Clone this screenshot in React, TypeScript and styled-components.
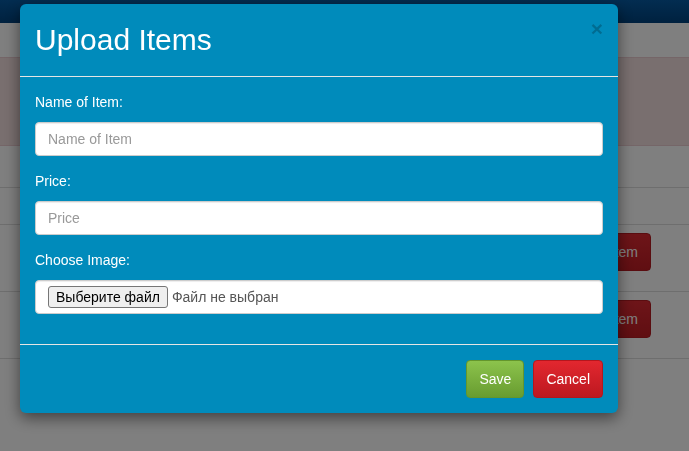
import React from "react";
import styled, { createGlobalStyle, css } from "styled-components";

const GlobalStyle = createGlobalStyle`
  html, body {
    margin: 0;
    padding: 0;
    background: #ffffff;
    font-family: "Liberation Sans", Arial, sans-serif;
  }
  * { box-sizing: border-box; }
`;

const Page = styled.div`
  display: flex;
  flex-direction: column;
  min-height: 451px;
  background: #ffffff;
`;

const Navbar = styled.div`
  height: 23px;
  background: linear-gradient(#065aa2, #00427e);
`;

const TopBand = styled.div`
  height: 34px;
  background: #ffffff;
`;

const Alert = styled.div`
  height: 89px;
  background: #f2dede;
  border-top: 1px solid #ebccd1;
  border-bottom: 1px solid #ebccd1;
`;

const Table = styled.div`
  margin-top: 41px;
  border-top: 1px solid #dddddd;
`;

const HeadRow = styled.div`
  height: 37px;
  border-bottom: 1px solid #dddddd;
`;

const Row = styled.div`
  display: flex;
  justify-content: flex-end;
  padding: 8px 38px 20px 0;
  border-bottom: 1px solid #dddddd;
`;

const DangerButton = styled.button`
  height: 38px;
  padding: 8px 12px;
  font-family: inherit;
  font-size: 14px;
  line-height: 20px;
  color: #ffffff;
  background: linear-gradient(#dc2a32, #c01d24);
  border: 1px solid #b51a21;
  border-radius: 4px;
`;

const Backdrop = styled.div`
  position: fixed;
  inset: 0;
  background: rgba(0, 0, 0, 0.5);
`;

const Modal = styled.div`
  position: fixed;
  top: 4px;
  left: 20px;
  width: 598px;
  display: flex;
  flex-direction: column;
  background: #008bbb;
  color: #ffffff;
  border-radius: 6px;
  box-shadow: 0 5px 15px rgba(0, 0, 0, 0.5);
`;

const Header = styled.div`
  display: flex;
  justify-content: space-between;
  align-items: flex-start;
  padding: 19px 15px 20px 15px;
  border-bottom: 1px solid #e5e5e5;
`;

const Title = styled.h3`
  margin: 0;
  font-size: 30px;
  line-height: 33px;
  font-weight: 400;
  color: #ffffff;
`;

const Close = styled.button`
  margin-top: -5px;
  padding: 0;
  background: none;
  border: 0;
  font-family: inherit;
  font-size: 21px;
  font-weight: 700;
  line-height: 1;
  color: #000000;
  opacity: 0.22;
`;

const Body = styled.div`
  padding: 15px;
`;

const FormGroup = styled.div`
  margin-bottom: 15px;
`;

const Label = styled.label`
  display: block;
  font-size: 14px;
  line-height: 20px;
  font-weight: 400;
  margin-bottom: 10px;
  color: #ffffff;
`;

const fieldBox = css`
  display: block;
  width: 100%;
  height: 34px;
  padding: 6px 12px;
  font-family: inherit;
  font-size: 14px;
  line-height: 20px;
  color: #555555;
  background: #ffffff;
  border: 1px solid #cccccc;
  border-radius: 4px;
  box-shadow: inset 0 1px 1px rgba(0, 0, 0, 0.075);
`;

const Input = styled.input`
  ${fieldBox}
  outline: none;
  &::placeholder {
    color: #999999;
  }
`;

const FileField = styled.div`
  ${fieldBox}
  display: flex;
  align-items: center;
  gap: 4px;
  padding-top: 0;
  padding-bottom: 0;
`;

const FileButton = styled.button`
  height: 22px;
  padding: 0 7px;
  font-family: inherit;
  font-size: 14px;
  line-height: 20px;
  color: #000000;
  background: #efefef;
  border: 1px solid #767676;
  border-radius: 3px;
`;

const FileStatus = styled.span`
  color: #555555;
  font-size: 14px;
`;

const Footer = styled.div`
  display: flex;
  justify-content: flex-end;
  gap: 9px;
  padding: 15px;
  border-top: 1px solid #e5e5e5;
`;

const ActionButton = styled.button<{ $variant: "save" | "cancel" }>`
  height: 38px;
  padding: 8px 12px;
  font-family: inherit;
  font-size: 14px;
  line-height: 20px;
  color: #ffffff;
  border-radius: 4px;
  ${({ $variant }) =>
    $variant === "save"
      ? css`
          background: linear-gradient(#8cc34c, #689c30);
          border: 1px solid #64962c;
        `
      : css`
          background: linear-gradient(#e2272f, #bd1820);
          border: 1px solid #b5161d;
        `}
`;

export default function App() {
  return (
    <>
      <GlobalStyle />
      <Page>
        <Navbar />
        <TopBand />
        <Alert />
        <Table>
          <HeadRow />
          <Row>
            <DangerButton>Delete Item</DangerButton>
          </Row>
          <Row>
            <DangerButton>Delete Item</DangerButton>
          </Row>
        </Table>
      </Page>
      <Backdrop />
      <Modal>
        <Header>
          <Title>Upload Items</Title>
          <Close aria-label="Close">×</Close>
        </Header>
        <Body>
          <FormGroup>
            <Label>Name of Item:</Label>
            <Input placeholder="Name of Item" />
          </FormGroup>
          <FormGroup>
            <Label>Price:</Label>
            <Input placeholder="Price" />
          </FormGroup>
          <FormGroup>
            <Label>Choose Image:</Label>
            <FileField>
              <FileButton>Выберите файл</FileButton>
              <FileStatus>Файл не выбран</FileStatus>
            </FileField>
          </FormGroup>
        </Body>
        <Footer>
          <ActionButton $variant="save">Save</ActionButton>
          <ActionButton $variant="cancel">Cancel</ActionButton>
        </Footer>
      </Modal>
    </>
  );
}
